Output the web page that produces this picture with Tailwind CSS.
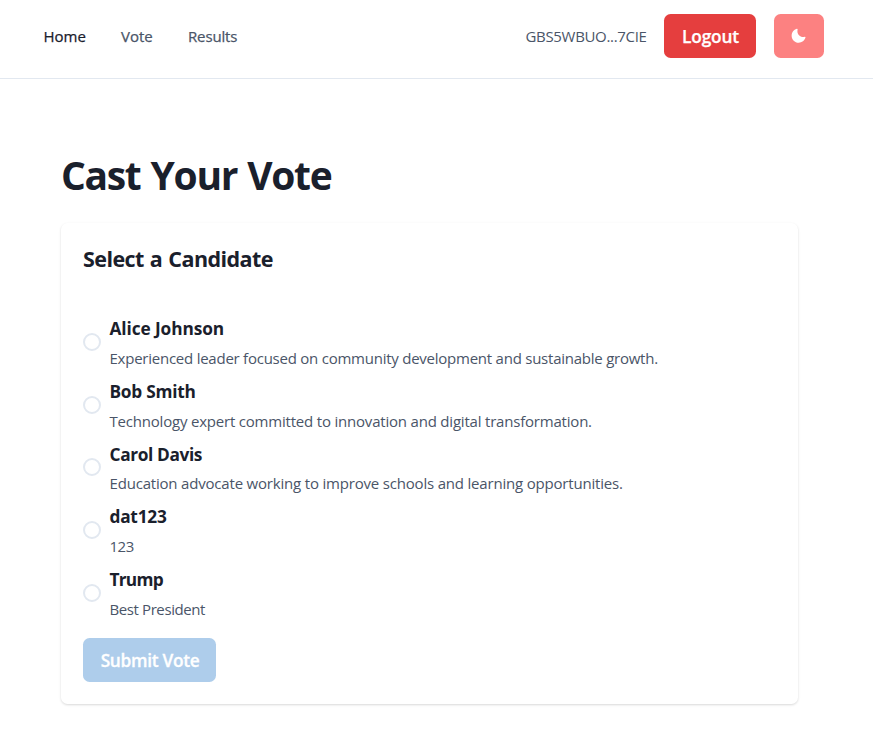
<!DOCTYPE html>
<html lang="en">
<head>
<meta charset="utf-8">
<title>Cast Your Vote</title>
<script src="https://cdn.jsdelivr.net/npm/@tailwindcss/browser@4"></script>
</head>
<body class="bg-white text-[#1a202c] font-['Open_Sans','Noto_Sans',sans-serif] h-[743px] overflow-hidden">
<header class="h-[79px] border-b border-[#e2e8f0] flex justify-between pl-[43.5px] pr-[49px] pt-[14px]">
  <nav class="flex h-11 items-center gap-[35px] text-[15px] text-[#4a5568] whitespace-nowrap [-webkit-text-stroke:0.25px]">
    <a class="w-[42.5px] text-[#1a202c]">Home</a>
    <a class="w-[32px]">Vote</a>
    <a class="tracking-[-0.15px]">Results</a>
  </nav>
  <div class="flex h-11 items-center">
    <span class="mr-[17.5px] text-[15px] tracking-[-0.33px] text-[#4a5568]">GBS5WBUO...7CIE</span>
    <button class="w-[92px] h-11 pt-[2px] pl-px rounded-[6.6px] bg-[#e53e3e] text-white text-[17.3px] font-semibold tracking-[-0.15px] [-webkit-text-stroke:0.25px]">Logout</button>
    <button class="ml-[18px] w-[50px] h-11 rounded-[6.6px] bg-[#fc8181] text-white flex items-center justify-center" aria-label="Toggle theme">
      <svg viewBox="0 0 24 24" class="w-[15.4px] h-[15.4px]" fill="currentColor"><path d="M21.4,13.7C20.6,13.9,19.8,14,19,14c-5,0-9-4-9-9c0-0.8,0.1-1.6,0.3-2.4c0.1-0.3,0-0.7-0.3-1 c-0.3-0.3-0.6-0.4-1-0.3C4.3,2.7,1,7.1,1,12c0,6.1,4.9,11,11,11c4.9,0,9.3-3.3,10.6-8.1c0.1-0.3,0-0.7-0.3-1 C22.1,13.7,21.7,13.6,21.4,13.7z"/></svg>
    </button>
  </div>
</header>
<main class="pl-[61px] pt-[69px] whitespace-nowrap">
  <h1 class="h-[53px] leading-[53px] text-[39px] font-bold tracking-[-1.35px] [word-spacing:1.5px]">Cast Your Vote</h1>
  <section class="mt-[22px] w-[737px] h-[481px] rounded-[6.6px] px-[22px] pt-[21px] shadow-[0_1px_3px_0_rgba(0,0,0,0.1),0_1px_2px_0_rgba(0,0,0,0.06)]">
    <h2 class="h-[30px] leading-[29px] text-[21.5px] font-bold tracking-[-0.56px] [word-spacing:1px]">Select a Candidate</h2>
    <div class="pt-[39px]">
      <label class="flex items-center h-[62.7px]">
        <span class="w-[18px] h-[18px] mr-[8.5px] rounded-full border-2 border-[#e2e8f0] -mt-[5px]"></span>
        <span>
          <b class="block h-[29px] leading-[30px] text-[17.3px] tracking-[-0.1px]">Alice Johnson</b>
          <span class="block h-[31px] leading-[30px] text-[15px] tracking-[-0.24px] text-[#4a5568]">Experienced leader focused on community development and sustainable growth.</span>
        </span>
      </label>
      <label class="flex items-center h-[62.7px]">
        <span class="w-[18px] h-[18px] mr-[8.5px] rounded-full border-2 border-[#e2e8f0] -mt-[5px]"></span>
        <span>
          <b class="block h-[29px] leading-[30px] text-[17.3px] tracking-[-0.25px]">Bob Smith</b>
          <span class="block h-[31px] leading-[30px] text-[15px] tracking-[-0.2px] text-[#4a5568]">Technology expert committed to innovation and digital transformation.</span>
        </span>
      </label>
      <label class="flex items-center h-[62.7px]">
        <span class="w-[18px] h-[18px] mr-[8.5px] rounded-full border-2 border-[#e2e8f0] -mt-[4.6px]"></span>
        <span>
          <b class="block h-[29px] leading-[30px] text-[17.3px] tracking-[-0.38px]">Carol Davis</b>
          <span class="block h-[31px] leading-[28px] text-[15px] tracking-[-0.19px] text-[#4a5568]">Education advocate working to improve schools and learning opportunities.</span>
        </span>
      </label>
      <label class="flex items-center h-[62.7px]">
        <span class="w-[18px] h-[18px] mr-[8.5px] rounded-full border-2 border-[#e2e8f0] -mt-[5px]"></span>
        <span>
          <b class="block h-[29px] leading-[30px] text-[17.3px] tracking-[-0.25px]">dat123</b>
          <span class="block h-[31px] leading-[30px] text-[15px] tracking-[-0.5px] text-[#4a5568]">123</span>
        </span>
      </label>
      <label class="flex items-center h-[62.7px]">
        <span class="w-[18px] h-[18px] mr-[8.5px] rounded-full border-2 border-[#e2e8f0] -mt-[5px]"></span>
        <span>
          <b class="block h-[29px] leading-[30px] text-[17.3px] tracking-[-0.75px]">Trump</b>
          <span class="block h-[31px] leading-[30px] text-[15px] tracking-[-0.4px] text-[#4a5568]">Best President</span>
        </span>
      </label>
    </div>
    <button class="mt-[11.5px] w-[133px] h-11 pt-[2px] pl-px rounded-[6.6px] bg-[#aecdeb] text-white text-[17.3px] font-semibold tracking-[-0.3px] [-webkit-text-stroke:0.3px]">Submit Vote</button>
  </section>
</main>
</body>
</html>
